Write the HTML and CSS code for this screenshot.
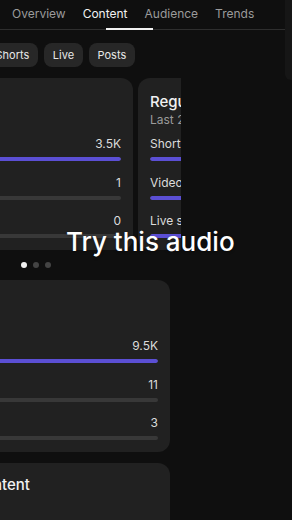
FILE: index.html
```html
<!DOCTYPE html>
<html lang="en">
<head>
    <meta charset="UTF-8">
    <meta name="viewport" content="width=device-width, initial-scale=1.0">
    <title>Channel analytics - Content</title>
    <link rel="stylesheet" href="styles.css">
</head>
<body>
    <div class="screen">
        <!-- Tabs -->
        <nav class="tabs">
            <span class="tab">Overview</span>
            <span class="tab active">Content</span>
            <span class="tab">Audience</span>
            <span class="tab">Trends</span>
            <span class="tab-indicator"></span>
        </nav>

        <!-- Filter chips -->
        <div class="chips">
            <span class="chip">Shorts</span>
            <span class="chip">Live</span>
            <span class="chip">Posts</span>
        </div>

        <!-- Card carousel -->
        <div class="carousel">
            <div class="card">
                <div class="card-head">
                    <div class="card-title">Views</div>
                    <div class="card-sub">Last 28 days</div>
                </div>
                <div class="row">
                    <div class="row-head"><span>Shorts</span><span class="value">3.5K</span></div>
                    <div class="track"><div class="fill" style="width: 100%"></div></div>
                </div>
                <div class="row">
                    <div class="row-head"><span>Videos</span><span class="value">1</span></div>
                    <div class="track"><div class="fill" style="width: 0%"></div></div>
                </div>
                <div class="row">
                    <div class="row-head"><span>Live</span><span class="value">0</span></div>
                    <div class="track"><div class="fill" style="width: 0%"></div></div>
                </div>
            </div>

            <div class="card">
                <div class="card-head">
                    <div class="card-title">Regular uploads</div>
                    <div class="card-sub">Last 28 days</div>
                </div>
                <div class="row">
                    <div class="row-head"><span>Shorts</span></div>
                    <div class="track"><div class="fill" style="width: 80%"></div></div>
                </div>
                <div class="row">
                    <div class="row-head"><span>Videos</span></div>
                    <div class="track"><div class="fill" style="width: 70%"></div></div>
                </div>
                <div class="row">
                    <div class="row-head"><span>Live streams</span></div>
                    <div class="track"><div class="fill" style="width: 60%"></div></div>
                </div>
            </div>
        </div>

        <div class="dots">
            <span class="dot on"></span>
            <span class="dot"></span>
            <span class="dot"></span>
        </div>

        <!-- Stacked cards -->
        <div class="stack">
            <div class="card">
                <div class="card-head">
                    <div class="card-title">Likes</div>
                    <div class="card-sub">Last 28 days</div>
                </div>
                <div class="row">
                    <div class="row-head"><span>Shorts</span><span class="value">9.5K</span></div>
                    <div class="track"><div class="fill" style="width: 100%"></div></div>
                </div>
                <div class="row">
                    <div class="row-head"><span>Videos</span><span class="value">11</span></div>
                    <div class="track"><div class="fill" style="width: 0%"></div></div>
                </div>
                <div class="row">
                    <div class="row-head"><span>Live</span><span class="value">3</span></div>
                    <div class="track"><div class="fill" style="width: 0%"></div></div>
                </div>
            </div>

            <div class="card top-card">
                <div class="card-title">Your top content</div>
            </div>
        </div>
    </div>

    <div class="edge">
        <div class="edge-panel"></div>
    </div>

    <div class="caption">Try this audio</div>
</body>
</html>
```

FILE: styles.css
```css
* {
    box-sizing: border-box;
    margin: 0;
    padding: 0;
}

body {
    width: 292px;
    height: 520px;
    overflow: hidden;
    display: flex;
    background-color: #0f0f0f;
    color: #f1f1f1;
    font-family: Inter, "Noto Sans", sans-serif;
}

.screen {
    width: 285px;
    flex-shrink: 0;
    overflow: hidden;
}

.edge {
    flex: 1;
}

.edge-panel {
    height: 80px;
    background-color: #161616;
    border-bottom-left-radius: 6px;
}

/* Tabs */
.tabs {
    position: relative;
    display: flex;
    gap: 17px;
    height: 30px;
    padding: 6px 0 0 12px;
    border-bottom: 1px solid #2e2e2e;
}

.tab {
    font-size: 12px;
    line-height: 16px;
    color: #9b9b9b;
    white-space: nowrap;
}

.tab.active {
    color: #f1f1f1;
}

.tab-indicator {
    position: absolute;
    left: 106px;
    bottom: -1px;
    width: 47px;
    height: 2px;
    background-color: #f1f1f1;
}

/* Chips */
.chips {
    display: flex;
    gap: 6.5px;
    margin: 13px 0 0 -13px;
}

.chip {
    height: 24px;
    padding: 0 8.5px;
    border-radius: 8px;
    background-color: #272727;
    font-size: 11px;
    line-height: 24px;
    color: #e8e8e8;
}

/* Cards */
.carousel {
    display: flex;
    gap: 5px;
    width: 308px;
    margin: 11px 0 0 -127px;
    overflow: hidden;
}

.card {
    flex-shrink: 0;
    width: 260px;
    padding: 14px 12px 12px;
    border-radius: 12px;
    background-color: #212121;
}

.card-head {
    margin-bottom: 8px;
}

.card-title {
    font-size: 15px;
    line-height: 20px;
    font-weight: 500;
    color: #f1f1f1;
    white-space: nowrap;
}

.card-sub {
    font-size: 12px;
    line-height: 16px;
    color: #9b9b9b;
    white-space: nowrap;
}

.row + .row {
    margin-top: 13.5px;
}

.row-head {
    display: flex;
    justify-content: space-between;
    font-size: 12px;
    line-height: 16px;
    color: #dcdcdc;
    white-space: nowrap;
}

.track {
    height: 4px;
    margin-top: 5px;
    border-radius: 2px;
    background-color: #383838;
    overflow: hidden;
}

.fill {
    height: 100%;
    border-radius: 2px;
    background-color: #5b4fd4;
}

.dots {
    display: flex;
    gap: 6px;
    margin-top: 12px;
    padding-left: 21px;
    align-items: center;
    height: 6px;
}

.dot {
    width: 6px;
    height: 6px;
    border-radius: 50%;
    background-color: #444;
}

.dot.on {
    background-color: #f1f1f1;
}

.stack {
    display: flex;
    flex-direction: column;
    gap: 11px;
    width: 271px;
    margin: 12px 0 0 -101px;
}

.stack .card {
    width: 100%;
}

.top-card {
    padding-top: 12px;
    height: 80px;
}

/* Overlay caption */
.caption {
    position: absolute;
    left: 66px;
    top: 229px;
    font-size: 26px;
    line-height: 26px;
    font-weight: 500;
    color: #fff;
    white-space: nowrap;
    text-shadow: 0 1px 3px rgba(0, 0, 0, 0.4);
}
```
